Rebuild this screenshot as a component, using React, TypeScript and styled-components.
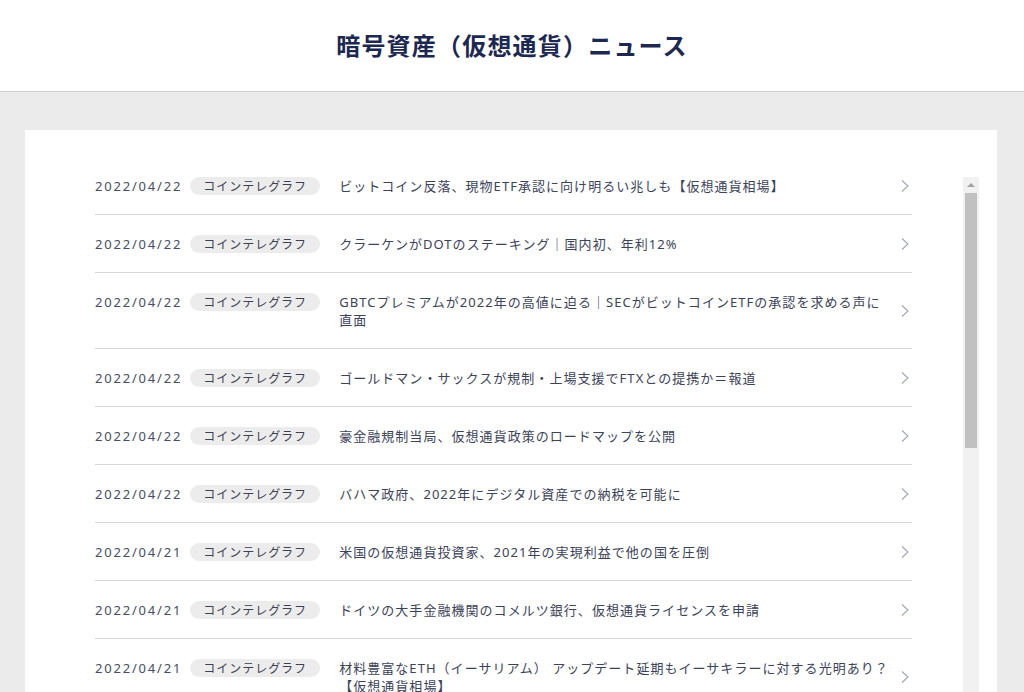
import React from "react";
import styled, { createGlobalStyle } from "styled-components";

const GlobalStyle = createGlobalStyle`
  html, body {
    margin: 0;
    padding: 0;
    background: #ebebeb;
    font-family: "Noto Sans", "Noto Sans CJK JP", sans-serif;
    overflow: hidden;
  }
  * {
    box-sizing: border-box;
  }
`;

const Page = styled.div`
  min-height: 100vh;
  background: #ebebeb;
`;

const Header = styled.header`
  height: 92px;
  background: #fff;
  border-bottom: 1px solid #cfcfcf;
  display: flex;
  justify-content: center;
  align-items: center;
`;

const Title = styled.h1`
  margin: 0 0 2px;
  font-size: 24px;
  font-weight: 700;
  letter-spacing: 0.05em;
  color: #1d2850;
  font-family: "Noto Sans CJK JP", "Noto Sans", sans-serif;
`;

const Main = styled.main`
  padding: 38px 27px 0 25px;
`;

const Card = styled.section`
  background: #fff;
  padding: 47px 18px 0 70px;
`;

const ScrollArea = styled.div`
  display: flex;
  gap: 51px;
  height: 600px;
`;

const Viewport = styled.div`
  flex: 1;
  overflow: hidden;
`;

// scrollbar drawn by hand: the headless browser hides native ones
const ScrollBar = styled.div`
  width: 16px;
  flex-shrink: 0;
  background: #f1f1f1;
  display: flex;
  flex-direction: column;
`;

const ScrollButton = styled.div`
  height: 16px;
  display: flex;
  justify-content: center;
  align-items: center;

  &::before {
    content: "";
    border-left: 4px solid transparent;
    border-right: 4px solid transparent;
    border-bottom: 4px solid #a3a3a3;
  }
`;

const Thumb = styled.div`
  height: 255px;
  margin: 0 2px;
  background: #c1c1c1;
`;

const List = styled.ul`
  list-style: none;
  margin: 0;
  padding: 0;
`;

const Item = styled.li`
  display: flex;
  align-items: center;
  padding: 20px 0 19px;
  border-bottom: 1px solid #d6d6d6;

  &:first-child {
    padding-top: 0;
  }
`;

const Meta = styled.div`
  display: flex;
  align-items: center;
  align-self: flex-start;
  flex-shrink: 0;
  height: 18px;
  margin-right: 19px;
`;

const Date = styled.span`
  font-size: 13px;
  letter-spacing: 1.8px;
  color: #474d63;
  margin-right: 8px;
  line-height: 18px;
`;

const Tag = styled.span`
  display: inline-block;
  width: 130px;
  height: 18px;
  line-height: 18px;
  border-radius: 9px;
  background: #ececec;
  text-align: center;
  font-size: 12px;
  letter-spacing: 0.08em;
  color: #3b4052;
  font-family: "Noto Sans CJK JP", sans-serif;
`;

const Headline = styled.span`
  flex: 1;
  font-size: 13px;
  line-height: 18px;
  letter-spacing: 0.08em;
  color: #3c4258;
  padding-right: 6px;
  font-family: "Noto Sans", "Noto Sans CJK JP", sans-serif;
`;

const Chevron = styled.svg`
  flex-shrink: 0;
  width: 10px;
  height: 14px;
  margin-left: 2px;
  margin-right: 2px;
`;

const news = [
  { date: "2022/04/22", title: "ビットコイン反落、現物ETF承認に向け明るい兆しも【仮想通貨相場】" },
  { date: "2022/04/22", title: "クラーケンがDOTのステーキング｜国内初、年利12%" },
  { date: "2022/04/22", title: "GBTCプレミアムが2022年の高値に迫る｜SECがビットコインETFの承認を求める声に直面" },
  { date: "2022/04/22", title: "ゴールドマン・サックスが規制・上場支援でFTXとの提携か＝報道" },
  { date: "2022/04/22", title: "豪金融規制当局、仮想通貨政策のロードマップを公開" },
  { date: "2022/04/22", title: "バハマ政府、2022年にデジタル資産での納税を可能に" },
  { date: "2022/04/21", title: "米国の仮想通貨投資家、2021年の実現利益で他の国を圧倒" },
  { date: "2022/04/21", title: "ドイツの大手金融機関のコメルツ銀行、仮想通貨ライセンスを申請" },
  { date: "2022/04/21", title: "材料豊富なETH（イーサリアム） アップデート延期もイーサキラーに対する光明あり？【仮想通貨相場】" },
  { date: "2022/04/21", title: "NFTマーケットプレイスのオープンシー、新たな買収を発表" },
  { date: "2022/04/21", title: "ビットコイン、4万2000ドル付近で推移｜米株式市場に連動" },
  { date: "2022/04/21", title: "フィデリティ、401kプランでビットコイン投資を可能に" },
  { date: "2022/04/21", title: "中央アフリカ共和国、ビットコインを法定通貨に採用" },
  { date: "2022/04/20", title: "ステーブルコイン規制法案、米上院で提出へ" },
  { date: "2022/04/20", title: "イーサリアムのマージ、テストネットで実施へ｜開発者が日程を確認" },
];

const App = () => {
  return (
    <Page>
      <GlobalStyle />
      <Header>
        <Title>暗号資産（仮想通貨）ニュース</Title>
      </Header>
      <Main>
        <Card>
          <ScrollArea>
            <Viewport>
              <List>
                {news.map((item, i) => (
                  <Item key={i}>
                    <Meta>
                      <Date>{item.date}</Date>
                      <Tag>コインテレグラフ</Tag>
                    </Meta>
                    <Headline>{item.title}</Headline>
                    <Chevron viewBox="0 0 10 14">
                      <polyline
                        points="2,1.5 8,7 2,12.5"
                        fill="none"
                        stroke="#a2a6b3"
                        strokeWidth="1.1"
                      />
                    </Chevron>
                  </Item>
                ))}
              </List>
            </Viewport>
            <ScrollBar>
              <ScrollButton />
              <Thumb />
            </ScrollBar>
          </ScrollArea>
        </Card>
      </Main>
    </Page>
  );
};

export default App;
